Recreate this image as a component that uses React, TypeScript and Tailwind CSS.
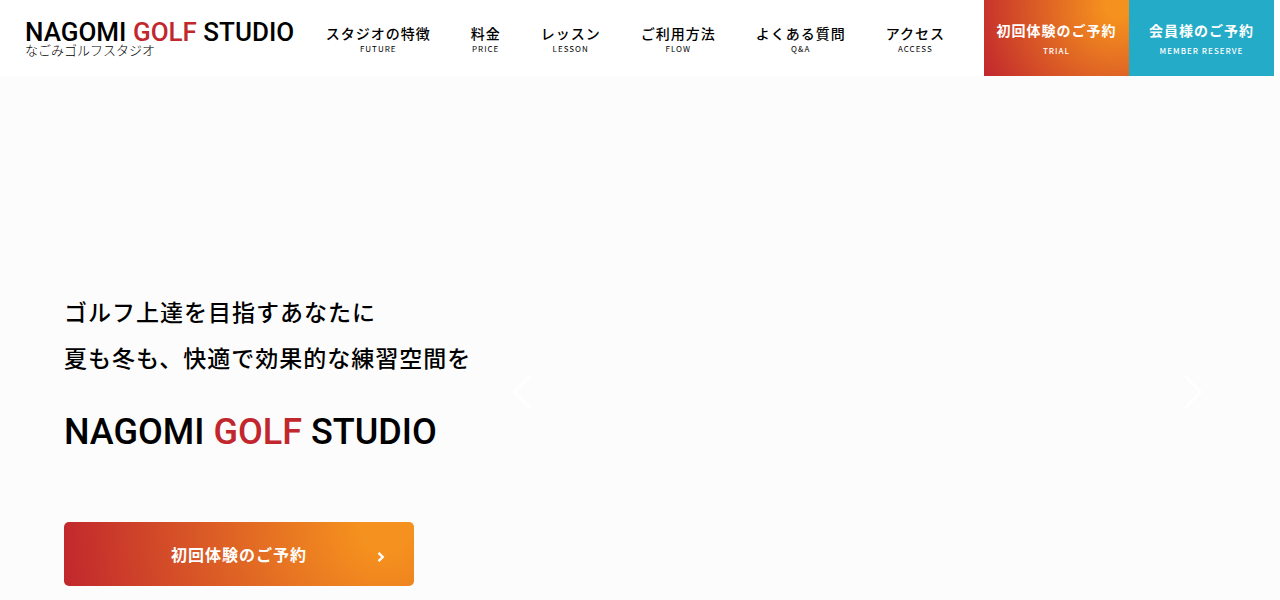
const navItems = [
  { label: "スタジオの特徴", sub: "FUTURE" },
  { label: "料金", sub: "PRICE" },
  { label: "レッスン", sub: "LESSON" },
  { label: "ご利用方法", sub: "FLOW" },
  { label: "よくある質問", sub: "Q&A" },
  { label: "アクセス", sub: "ACCESS" },
];

const warm =
  "bg-[radial-gradient(circle_at_92%_8%,#f5911e_8%,#c1272d_100%)]";

function BrandName() {
  return (
    <>
      NAGOMI <span className="text-[#c1272d]">GOLF</span> STUDIO
    </>
  );
}

function Header() {
  return (
    <header className="flex h-[76px] items-stretch bg-white pr-1.5">
      <a href="#top" className="flex shrink-0 flex-col pt-5 pl-[25px] tracking-normal whitespace-nowrap">
        <span className="font-['Roboto',sans-serif] text-[26px] leading-[25px] font-medium">
          <BrandName />
        </span>
        <span className="text-[13px] leading-[10px] font-light">なごみゴルフスタジオ</span>
      </a>
      <nav className="ml-auto flex gap-10 pt-[22px] pr-[39px] whitespace-nowrap">
        {navItems.map((item) => (
          <a key={item.sub} href={"#" + item.sub.toLowerCase()} className="flex flex-col items-center">
            <span className="text-sm leading-[22px] font-medium">{item.label}</span>
            <span className="text-[8px] leading-[10px]">{item.sub}</span>
          </a>
        ))}
      </nav>
      <a
        href="#trial"
        className={"flex w-[145px] shrink-0 flex-col items-center pt-5 font-medium whitespace-nowrap text-white " + warm}
      >
        <span className="text-sm leading-5 font-bold">初回体験のご予約</span>
        <span className="mt-1.5 text-[8px] leading-[10px]">TRIAL</span>
      </a>
      <a
        href="#member"
        className="flex w-[145px] shrink-0 flex-col items-center bg-[#24abc7] pt-5 font-medium whitespace-nowrap text-white"
      >
        <span className="text-sm leading-5 font-bold">会員様のご予約</span>
        <span className="mt-1.5 text-[8px] leading-[10px]">MEMBER RESERVE</span>
      </a>
    </header>
  );
}

function Arrow({ points, label }: { points: string; label: string }) {
  return (
    <button type="button" aria-label={label} className="h-9 w-5">
      <svg viewBox="0 0 20 36" className="h-9 w-5" fill="none" stroke="#fff" strokeWidth="2.5">
        <polyline points={points} />
      </svg>
    </button>
  );
}

export default function App() {
  return (
    <div
      id="top"
      className="flex min-h-screen flex-col bg-[#fcfcfc] font-['Noto_Sans_CJK_JP',sans-serif] tracking-[1px] text-black"
    >
      <Header />
      <main className="flex grow pt-[212px] pl-16">
        <section className="w-[448px] shrink-0 whitespace-nowrap">
          <p className="text-[23px] leading-[46px] font-medium">
            ゴルフ上達を目指すあなたに
            <br />
            夏も冬も、快適で効果的な練習空間を
          </p>
          <h1 className="mt-7 font-['Roboto',sans-serif] text-[36px] leading-[48px] font-medium tracking-normal">
            <BrandName />
          </h1>
          <a
            href="#trial"
            className={"mt-[66px] flex h-16 w-[350px] items-center rounded-[5px] pr-[29px] pl-[37px] text-base font-bold text-white " + warm}
          >
            <span className="grow text-center">初回体験のご予約</span>
            <svg viewBox="0 0 8 12" className="mt-1.5 h-3 w-2" fill="none" stroke="currentColor" strokeWidth="2.4">
              <path d="M1.5 1.8 L5.7 6 L1.5 10.2" />
            </svg>
          </a>
        </section>
        <section aria-label="スライド" className="flex grow items-start justify-between pt-[86px] pr-[77px]">
          <Arrow label="前へ" points="18,2 2,18 18,34" />
          <Arrow label="次へ" points="2,2 18,18 2,34" />
        </section>
      </main>
    </div>
  );
}
